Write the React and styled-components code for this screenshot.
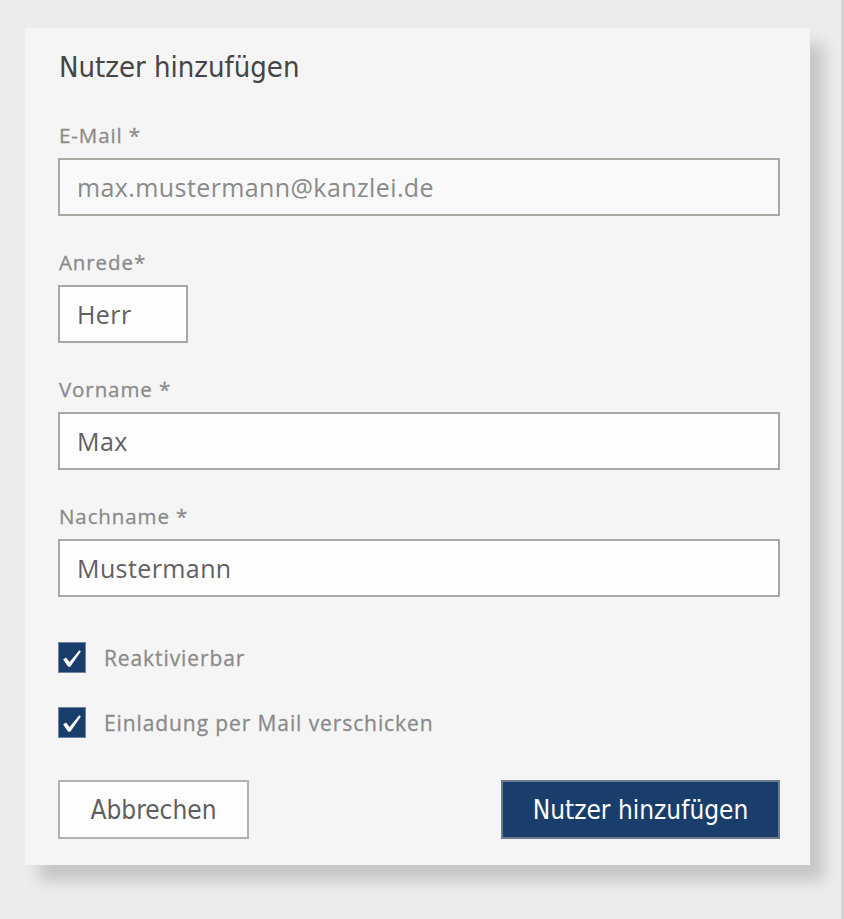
import React from "react";
import styled, { createGlobalStyle } from "styled-components";

const Global = createGlobalStyle`
  html, body { margin: 0; padding: 0; background: #ececec; }
  body { font-family: "Open Sans", Roboto, sans-serif; }
  * { box-sizing: border-box; }
`;

const Page = styled.div`
  display: flex;
  min-height: 919px;
  width: 844px;
`;

const Main = styled.div`
  flex: 1;
  padding: 28px 0 0 25px;
`;

const Stripe = styled.div`
  width: 3px;
  background: #d6d6d6;
`;

const Card = styled.div`
  width: 785px;
  height: 837px;
  background: #f5f5f5;
  padding: 22px 30px 0 33px;
  box-shadow: 14px 16px 14px rgba(0, 0, 0, 0.16);
  display: flex;
  flex-direction: column;
`;

const Title = styled.h1`
  margin: 0 0 39px 1px;
  font-family: "Liberation Sans Narrow", "DejaVu Sans Condensed", Roboto, sans-serif;
  font-weight: 400;
  font-size: 29px;
  line-height: 34px;
  color: #454545;
`;

const Field = styled.div`
  display: flex;
  flex-direction: column;
  align-items: flex-start;
  margin-bottom: 34px;
`;

const Label = styled.label`
  font-size: 20.5px;
  line-height: 24px;
  letter-spacing: 0.9px;
  color: #8a8a8a;
  -webkit-text-stroke: 0.3px #8a8a8a;
  margin: 0 0 11px 1px;
`;

const Input = styled.div`
  width: ${(p) => p.$width || "100%"};
  height: 58px;
  border: 2px solid #aba7a3;
  background: ${(p) => (p.$disabled ? "#f9f9f9" : "#fefefe")};
  color: ${(p) => (p.$disabled ? "#8a8a8a" : "#616161")};
  font-size: 25px;
  letter-spacing: 0.4px;
  display: flex;
  align-items: center;
  padding: 0 0 0 17px;
`;

const Checks = styled.div`
  display: flex;
  flex-direction: column;
  gap: 34px;
  margin-top: 11px;
`;

const CheckRow = styled.div`
  display: flex;
  align-items: center;
  gap: 18px;
`;

const Box = styled.span`
  width: 28px;
  height: 31px;
  background: #1a3e6c;
  border: 1px solid #6f85a3;
  display: flex;
  align-items: center;
  justify-content: center;
  padding-top: 1px;
`;

const CheckText = styled.span`
  font-size: 21px;
  letter-spacing: 0.9px;
  color: #8a8a8a;
  -webkit-text-stroke: 0.3px #8a8a8a;
`;

const Buttons = styled.div`
  display: flex;
  justify-content: space-between;
  margin-top: 42px;
`;

const Button = styled.button`
  height: 59px;
  width: ${(p) => p.$width};
  border: 2px solid ${(p) => (p.$primary ? "#6d7a8c" : "#b4b0ac")};
  background: ${(p) => (p.$primary ? "#1a3e6c" : "#fefefe")};
  color: ${(p) => (p.$primary ? "#ffffff" : "#5f5f5f")};
  font-family: "Liberation Sans Narrow", "DejaVu Sans Condensed", Roboto, sans-serif;
  font-size: 26px;
  padding: 0;
  cursor: pointer;
`;

const Check = () => (
  <svg width="20" height="19" viewBox="0 0 18 17">
    <path d="M1 9.5 L3.6 7.6 L6.8 11.6 L15.6 1 L17 2.2 L7.4 16 L5.6 16 Z" fill="#fff" />
  </svg>
);

export default function App() {
  return (
    <Page>
      <Global />
      <Main>
        <Card>
          <Title>Nutzer hinzufügen</Title>
          <Field>
            <Label>E-Mail *</Label>
            <Input $disabled>max.mustermann@kanzlei.de</Input>
          </Field>
          <Field>
            <Label>Anrede*</Label>
            <Input $width="130px">Herr</Input>
          </Field>
          <Field>
            <Label>Vorname *</Label>
            <Input>Max</Input>
          </Field>
          <Field>
            <Label>Nachname *</Label>
            <Input>Mustermann</Input>
          </Field>
          <Checks>
            <CheckRow>
              <Box><Check /></Box>
              <CheckText>Reaktivierbar</CheckText>
            </CheckRow>
            <CheckRow>
              <Box><Check /></Box>
              <CheckText>Einladung per Mail verschicken</CheckText>
            </CheckRow>
          </Checks>
          <Buttons>
            <Button $width="191px">Abbrechen</Button>
            <Button $primary $width="279px">Nutzer hinzufügen</Button>
          </Buttons>
        </Card>
      </Main>
      <Stripe />
    </Page>
  );
}
